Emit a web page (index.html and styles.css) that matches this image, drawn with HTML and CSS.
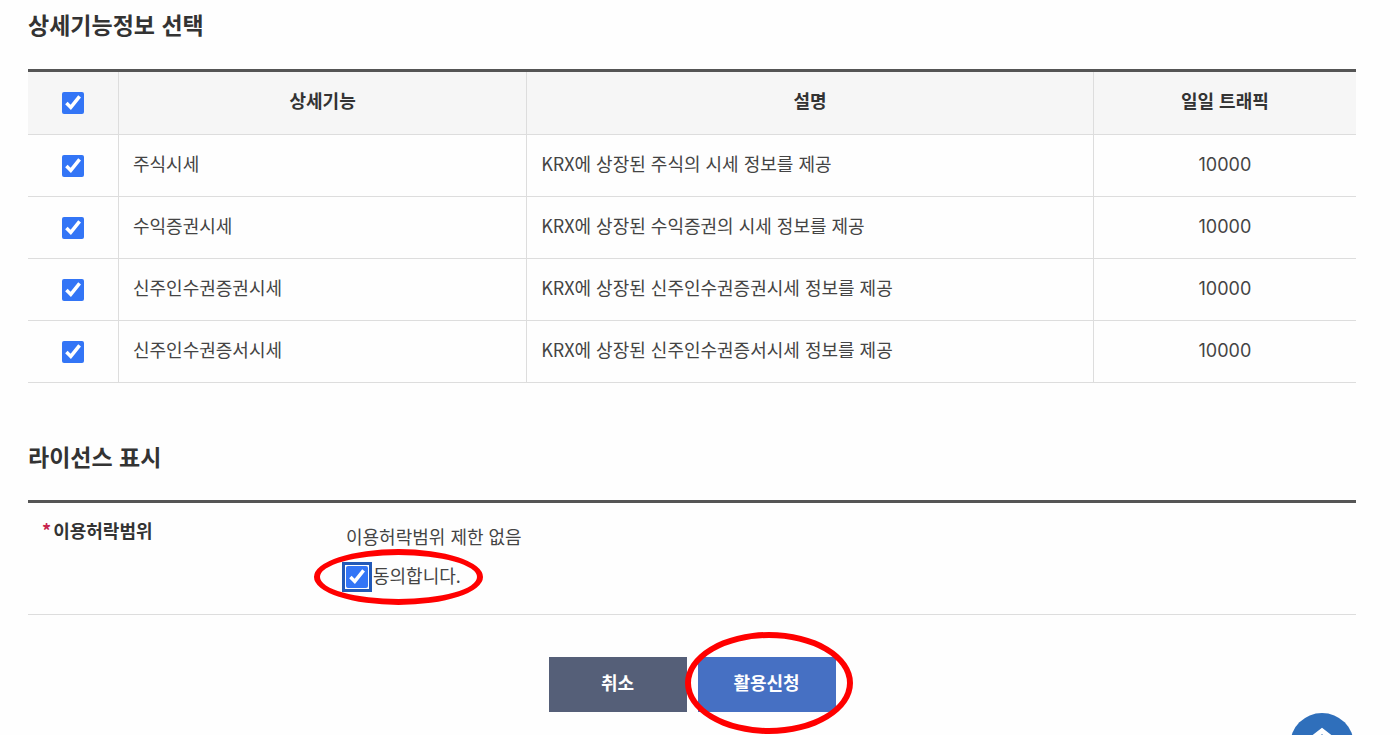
FILE: index.html
```html
<!DOCTYPE html>
<html lang="ko">
<head>
    <meta charset="UTF-8">
    <meta name="viewport" content="width=device-width, initial-scale=1.0">
    <title>활용신청</title>
    <link rel="stylesheet" href="styles.css">
</head>
<body>

    <form class="page">
        <h2 class="section-title">상세기능정보 선택</h2>

        <table class="func-table">
            <colgroup>
                <col class="col-check">
                <col class="col-name">
                <col class="col-desc">
                <col class="col-traffic">
            </colgroup>
            <thead>
                <tr>
                    <th class="check"><input type="checkbox" class="checkbox" aria-label="전체 선택" checked></th>
                    <th>상세기능</th>
                    <th>설명</th>
                    <th>일일 트래픽</th>
                </tr>
            </thead>
            <tbody>
                <tr>
                    <td class="check"><input type="checkbox" class="checkbox" id="func1" checked></td>
                    <td><label for="func1">주식시세</label></td>
                    <td>KRX에 상장된 주식의 시세 정보를 제공</td>
                    <td class="traffic">10000</td>
                </tr>
                <tr>
                    <td class="check"><input type="checkbox" class="checkbox" id="func2" checked></td>
                    <td><label for="func2">수익증권시세</label></td>
                    <td>KRX에 상장된 수익증권의 시세 정보를 제공</td>
                    <td class="traffic">10000</td>
                </tr>
                <tr>
                    <td class="check"><input type="checkbox" class="checkbox" id="func3" checked></td>
                    <td><label for="func3">신주인수권증권시세</label></td>
                    <td>KRX에 상장된 신주인수권증권시세 정보를 제공</td>
                    <td class="traffic">10000</td>
                </tr>
                <tr>
                    <td class="check"><input type="checkbox" class="checkbox" id="func4" checked></td>
                    <td><label for="func4">신주인수권증서시세</label></td>
                    <td>KRX에 상장된 신주인수권증서시세 정보를 제공</td>
                    <td class="traffic">10000</td>
                </tr>
            </tbody>
        </table>

        <h2 class="section-title">라이선스 표시</h2>

        <div class="license">
            <div class="license-name"><span class="required">*</span>이용허락범위</div>
            <div class="license-body">
                <p class="license-text">이용허락범위 제한 없음</p>
                <div class="agree">
                    <input type="checkbox" class="checkbox focused" id="agree" checked>
                    <label for="agree">동의합니다.</label>
                    <span class="mark mark-agree"></span>
                </div>
            </div>
        </div>

        <div class="buttons">
            <button type="button" class="btn btn-cancel">취소</button>
            <div class="submit-wrap">
                <button type="button" class="btn btn-submit">활용신청</button>
                <span class="mark mark-submit"></span>
            </div>
        </div>
    </form>

    <button type="button" class="go-top" aria-label="맨 위로">
        <svg width="64" height="64" viewBox="0 0 64 64">
            <path d="M19 28 L32 18 L45 28" fill="none" stroke="#fff" stroke-width="5"/>
        </svg>
    </button>

</body>
</html>
```

FILE: styles.css
```css
* {
    box-sizing: border-box;
}

body {
    margin: 0;
    background-color: #fefefe;
    color: #444;
    font-family: "Noto Sans CJK KR", sans-serif;
    font-size: 18px;
    line-height: 26px;
}

.page {
    padding: 7px 44px 22px 28px;
}

.section-title {
    margin: 0;
    color: #333;
    font-size: 23px;
    line-height: 34px;
    font-weight: 700;
}

.func-table {
    width: 100%;
    margin: 28px 0 56px;
    table-layout: fixed;
    border-collapse: separate;
    border-spacing: 0;
    border-top: 3px solid #555;
}

.col-check {
    width: 91px;
}

.col-name {
    width: 33%;
}

.col-desc {
    width: 45.8%;
}

.col-traffic {
    width: 21.2%;
}

.func-table th,
.func-table td {
    height: 62px;
    padding: 0 14px 6px;
    border-bottom: 1px solid #ddd;
    border-right: 1px solid #ddd;
    text-align: left;
    vertical-align: middle;
}

.func-table th:last-child,
.func-table td:last-child {
    border-right: none;
}

.func-table th {
    height: 63px;
    background-color: #f6f6f6;
    color: #333;
    font-weight: 700;
    text-align: center;
}

.func-table .check {
    padding: 0;
}

.func-table .check .checkbox {
    display: block;
    margin: 0 auto;
}

.func-table .traffic {
    padding-bottom: 2px;
    font-family: Inter, sans-serif;
    text-align: center;
}

.checkbox {
    width: 22px;
    height: 22px;
    margin: 0;
    accent-color: #3375f6;
}

.checkbox.focused {
    outline: 3px solid #2259b8;
    outline-offset: 1px;
    border-radius: 2px;
}

.license {
    display: flex;
    margin-top: 27px;
    padding: 14px 14px 24px;
    border-top: 3px solid #555;
    border-bottom: 1px solid #ddd;
}

.license-name {
    width: 304px;
    color: #333;
    font-weight: 700;
}

.required {
    margin-right: 2px;
    color: #c7254e;
}

.license-text {
    margin: 6px 0 15px;
}

.agree {
    display: flex;
    align-items: center;
    gap: 5px;
    position: relative;
    width: max-content;
    height: 26px;
}

.agree label {
    padding-bottom: 4px;
}

/* red circles drawn over the controls */
.mark {
    position: absolute;
    border: 6px solid #f00;
    border-radius: 50%;
    pointer-events: none;
}

.mark-agree {
    top: -15px;
    left: -32px;
    width: 169px;
    height: 56px;
}

.mark-submit {
    top: -25px;
    left: -13px;
    width: 168px;
    height: 102px;
}

.buttons {
    display: flex;
    justify-content: center;
    gap: 11px;
    margin-top: 42px;
}

.submit-wrap {
    position: relative;
}

.btn {
    display: block;
    width: 138px;
    height: 55px;
    padding: 0 0 5px;
    border: none;
    color: #fff;
    font-family: inherit;
    font-size: 18px;
    font-weight: 700;
    cursor: pointer;
}

.btn-cancel {
    background-color: #555f78;
}

.btn-submit {
    background-color: #4670c3;
}

.go-top {
    position: fixed;
    right: 46px;
    bottom: -42px;
    width: 64px;
    height: 64px;
    padding: 0;
    border: none;
    border-radius: 50%;
    background-color: #2f6fbb;
    cursor: pointer;
}
```
